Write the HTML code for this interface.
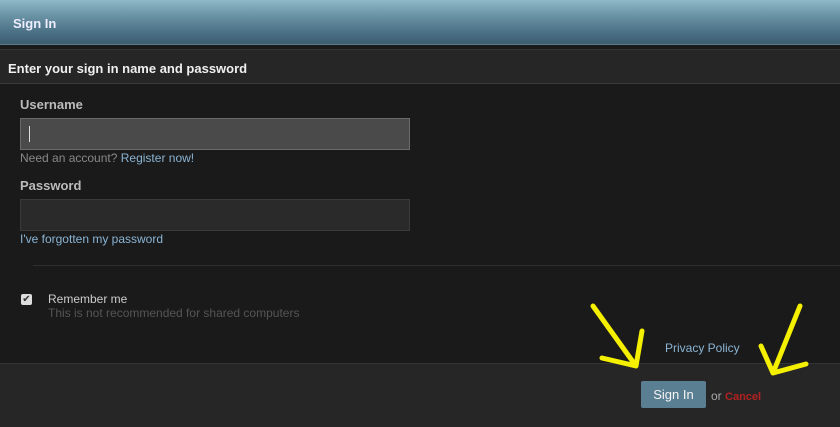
<!DOCTYPE html>
<html><head><meta charset="utf-8"><style>
*{margin:0;padding:0;box-sizing:border-box}
body{width:840px;height:427px;background:#1a1a1a;font-family:"Liberation Sans",sans-serif;font-size:12px;color:#ccc;position:relative;overflow:hidden}
.hdr{position:absolute;left:0;top:0;width:840px;height:45px;background:linear-gradient(180deg,#8fb8c8 0%,#6f98ab 30%,#4e7388 70%,#3d5c70 100%);border-bottom:1px solid #5a7a8c}
.hdr span{position:absolute;left:13px;top:16px;font-weight:bold;color:#eef;font-size:13px}
.bar{position:absolute;left:0;top:49px;width:840px;height:35px;background:#262626;border-top:1px solid #333;border-bottom:1px solid #3a3a3a}
.bar span{position:absolute;left:8px;top:11px;font-weight:bold;color:#f0f0f0;font-size:13px}
.lbl{position:absolute;left:20px;font-weight:bold;color:#bbb;font-size:13px}
.inp{position:absolute;left:20px;width:390px;height:32px;border:1px solid #555}
.t{position:absolute;font-size:12px}
a{color:#8ab4d4;text-decoration:none}
.foot{position:absolute;left:0;top:363px;width:840px;height:64px;background:#262626;border-top:1px solid #333}
</style></head><body>
<div class="hdr"><span>Sign In</span></div>
<div class="bar"><span>Enter your sign in name and password</span></div>
<div class="lbl" style="top:97px">Username</div>
<div class="inp" style="top:118px;background:#4a4a4a;border-color:#6a6a6a"><div style="position:absolute;left:8px;top:7px;width:1px;height:16px;background:#ddd"></div></div>
<div class="t" style="left:20px;top:151px;color:#888">Need an account? <a>Register now!</a></div>
<div class="lbl" style="top:178px">Password</div>
<div class="inp" style="top:199px;background:#2a2a2a;border-color:#3a3a3a"></div>
<div class="t" style="left:20px;top:232px"><a>I've forgotten my password</a></div>
<div style="position:absolute;left:33px;top:265px;width:807px;height:1px;background:#2e2e2e"></div>
<div style="position:absolute;left:21px;top:294px;width:11px;height:11px;background:#ddd;border-radius:2px;color:#333;font-size:10px;line-height:11px;text-align:center">✔</div>
<div class="t" style="left:48px;top:292px;color:#ccc">Remember me</div>
<div class="t" style="left:48px;top:306px;color:#555">This is not recommended for shared computers</div>
<div class="t" style="left:665px;top:341px"><a>Privacy Policy</a></div>
<div class="foot"></div>
<div style="position:absolute;left:641px;top:381px;width:65px;height:27px;background:#5a7f93;border-radius:2px;color:#f4f4f4;font-size:13px;text-align:center;line-height:27px">Sign In</div>
<div class="t" style="left:711px;top:389px;color:#aaa">or <b style="color:#b32020;font-size:11px">Cancel</b></div>
<svg style="position:absolute;left:0;top:0" width="840" height="427"><g stroke="#f5f000" stroke-width="5" fill="none" stroke-linecap="round" stroke-linejoin="round">
<path d="M593 306 L636 366 M602 358 L636 366 L642 331"/>
<path d="M800 306 L773 373 M761 346 L773 373 L806 364"/>
</g></svg>
</body></html>
